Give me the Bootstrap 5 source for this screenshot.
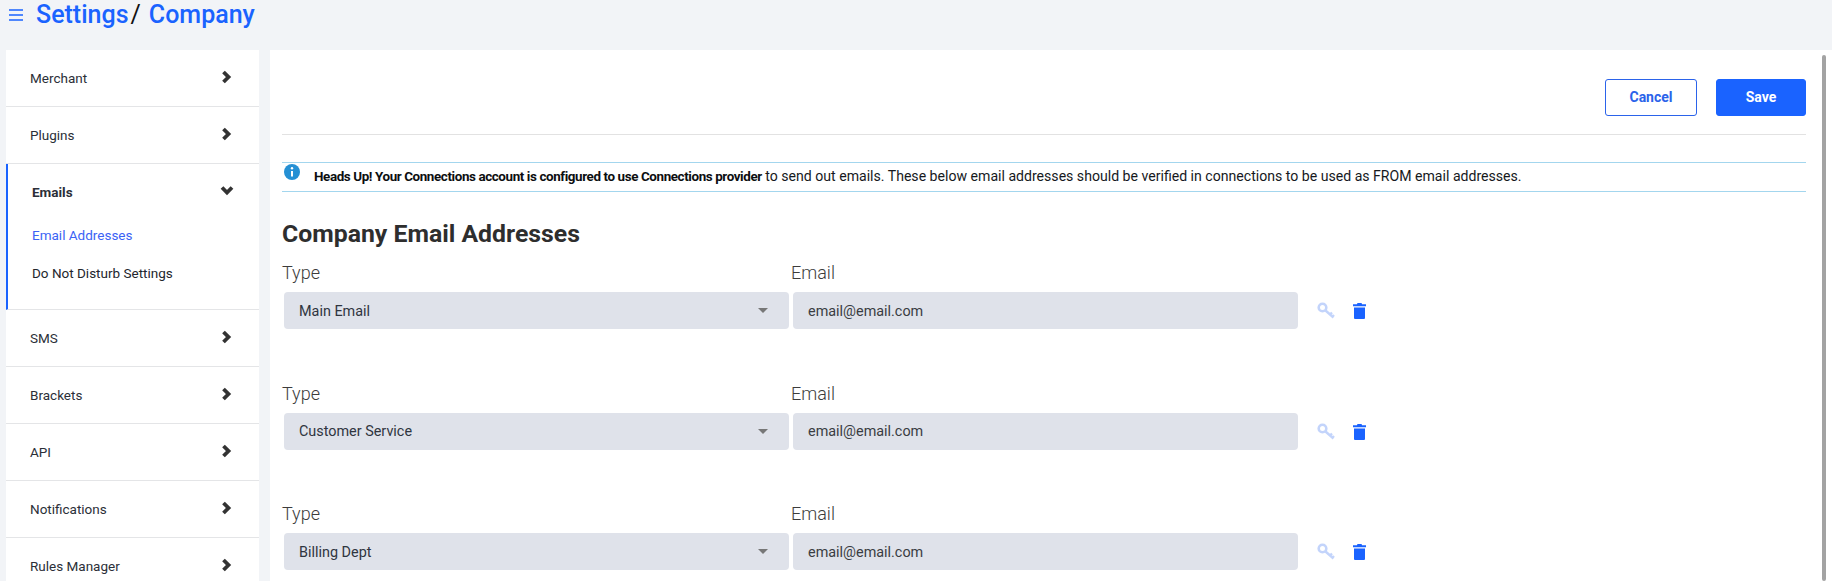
<!DOCTYPE html>
<html lang="en"><head><meta charset="utf-8"><title>Settings / Company</title>
<link href="https://cdn.jsdelivr.net/npm/bootstrap@5.3.0/dist/css/bootstrap.min.css" rel="stylesheet">
<style>
html,body{height:581px;overflow:hidden}
body{background:#f2f4f7;font-family:Roboto,"Liberation Sans",sans-serif;color:#212529}
.topbar{height:50px;padding:0 0 0 9px;color:#1a63ff}
.topbar .burger{width:14px;height:12px;margin-top:9px;margin-right:13px}
.crumb{font-size:25px;font-weight:500;line-height:29px;color:#1a63ff;text-decoration:none}
.sep{font-size:25px;line-height:29px;color:#111;margin:0 8px 0 2px}
.shell{height:531px;padding-left:6px;overflow:hidden}
.sidebar{width:253px;height:531px;overflow:hidden;margin-right:11px;background:#fff;flex:none}
.side-item{height:57px;padding:0 27px 0 24px;border-bottom:1px solid #e4e5e7;font-size:13.5px;color:#2b2f38;text-decoration:none}
.side-open{height:146px;border-left:2px solid #1a63ff;border-bottom:1px solid #e4e5e7;padding:19px 27px 0 24px;font-size:13.5px}
.side-open .head{font-weight:700;height:18px;color:#2b2f38}
.side-open a{display:block;line-height:18px;text-decoration:none;color:#23262d}
.side-open a.first{margin-top:25px;color:#3b63f5}
.side-open a.second{margin-top:20px}
.chev{width:11px;height:14px;flex:none;margin-top:-3px}
.chev-d{width:14px;height:11px;flex:none;margin:-3px -2px 0 0}
.panel{background:#fff;flex:1;height:531px;overflow:hidden;padding:29px 26px 0 12px;position:relative;min-width:0}
.scroll-thumb{position:absolute;right:6px;top:5px;width:4px;height:526px;background:#a3a3a3;border-radius:2px}
.actions{height:56px;border-bottom:1px solid #e2e2e2;gap:19px}
.btn-a{width:92px;height:37px;font-size:14px;font-weight:700;border-radius:3px;padding:0;border:1px solid #2b63ea;color:#2b63ea;background:#fff}
.btn-b{width:90px;height:37px;font-size:14px;font-weight:700;border-radius:3px;padding:0;background:#1a63ff;border:1px solid #1a63ff;color:#fff}
.notice{margin-top:27px;height:30px;border-top:1px solid #a3d6ee;border-bottom:1px solid #a3d6ee;font-size:14.1px;color:#16191d;line-height:27px;padding-left:2px}
.notice svg{width:16px;height:16px;margin:1px 14px 0 0;flex:none}
.notice b{font-weight:700;font-size:13.4px;letter-spacing:-.39px;color:#0c0e10}
.ttl{font-size:24.8px;font-weight:700;color:#2e2e2e;line-height:28px;margin:28px 0 2px}
.rowset{height:120.5px;padding-top:11px}
.lab{font-size:18px;font-weight:300;color:#3c3c3c;line-height:24px;height:24px;margin-bottom:7px}
.lab-a{width:509px}
.field{height:37px;border:0;border-radius:4px;background-color:#dfe2ea;color:#2f3540;font-size:14.4px;box-shadow:none;padding:1px 15px 0}
.sel{width:505px;margin:0 4px 0 2px;padding-top:2px;background-image:url("data:image/svg+xml,%3csvg xmlns='http://www.w3.org/2000/svg' viewBox='0 0 10 5'%3e%3cpath d='M0 0h10L5 5z' fill='%23777'/%3e%3c/svg%3e");background-position:right 21px center;background-size:10px 5px}
.inp{width:505px;flex:none;color:#3a3d42}
.inp:focus,.sel:focus{background-color:#dfe2ea;box-shadow:none}
.ico-row{margin-left:19px;gap:18px;padding-top:1px}
.key{width:18px;height:18px}
.trash{width:13px;height:16px}
</style></head>
<body>
<div class="topbar d-flex align-items-start">
 <svg class="burger" viewBox="0 0 14 12" aria-hidden="true"><path d="M0 1h14M0 6h14M0 11h14" stroke="#1a63ff" stroke-width="1.6"/></svg>
 <a class="crumb" href="#">Settings</a><span class="sep">/</span><a class="crumb" href="#">Company</a>
</div>
<div class="shell d-flex">
 <nav class="sidebar">
  <a class="side-item d-flex align-items-center justify-content-between" href="#">Merchant <svg class="chev" viewBox="0 0 11 14"><path d="M2.5 2l5 5-5 5" fill="none" stroke="#333" stroke-width="3.8"/></svg></a>
  <a class="side-item d-flex align-items-center justify-content-between" href="#">Plugins <svg class="chev" viewBox="0 0 11 14"><path d="M2.5 2l5 5-5 5" fill="none" stroke="#333" stroke-width="3.8"/></svg></a>
  <div class="side-open">
   <div class="head d-flex align-items-center justify-content-between">Emails <svg class="chev-d" viewBox="0 0 14 11"><path d="M2 2.5l5 5 5-5" fill="none" stroke="#333" stroke-width="3.8"/></svg></div>
   <a class="first" href="#">Email Addresses</a>
   <a class="second" href="#">Do Not Disturb Settings</a>
  </div>
  <a class="side-item d-flex align-items-center justify-content-between" href="#">SMS <svg class="chev" viewBox="0 0 11 14"><path d="M2.5 2l5 5-5 5" fill="none" stroke="#333" stroke-width="3.8"/></svg></a>
  <a class="side-item d-flex align-items-center justify-content-between" href="#">Brackets <svg class="chev" viewBox="0 0 11 14"><path d="M2.5 2l5 5-5 5" fill="none" stroke="#333" stroke-width="3.8"/></svg></a>
  <a class="side-item d-flex align-items-center justify-content-between" href="#">API <svg class="chev" viewBox="0 0 11 14"><path d="M2.5 2l5 5-5 5" fill="none" stroke="#333" stroke-width="3.8"/></svg></a>
  <a class="side-item d-flex align-items-center justify-content-between" href="#">Notifications <svg class="chev" viewBox="0 0 11 14"><path d="M2.5 2l5 5-5 5" fill="none" stroke="#333" stroke-width="3.8"/></svg></a>
  <a class="side-item d-flex align-items-center justify-content-between" href="#">Rules Manager <svg class="chev" viewBox="0 0 11 14"><path d="M2.5 2l5 5-5 5" fill="none" stroke="#333" stroke-width="3.8"/></svg></a>
 </nav>
 <main class="panel">
  <div class="scroll-thumb"></div>
  <div class="actions d-flex justify-content-end align-items-start">
   <button class="btn btn-a" type="button">Cancel</button>
   <button class="btn btn-b" type="button">Save</button>
  </div>
  <div class="notice d-flex align-items-start">
   <svg viewBox="0 0 16 16"><circle cx="8" cy="8" r="8" fill="#2590d4"/><circle cx="8" cy="4.3" r="1.2" fill="#fff"/><path d="M8 7v5.5" stroke="#fff" stroke-width="2"/></svg>
   <span><b>Heads Up! Your Connections account is configured to use Connections provider</b> to send out emails. These below email addresses should be verified in connections to be used as FROM email addresses.</span>
  </div>
  <h2 class="ttl">Company Email Addresses</h2>

  <div class="rowset">
   <div class="d-flex lab"><div class="lab-a">Type</div><div>Email</div></div>
   <div class="d-flex align-items-center">
    <select class="form-select field sel"><option>Main Email</option></select>
    <input class="form-control field inp" value="email@email.com">
    <div class="d-flex align-items-center ico-row">
     <svg class="key" viewBox="0 0 18 18"><circle cx="5.5" cy="5.5" r="3.8" fill="none" stroke="#c3d4fb" stroke-width="2.6"/><path d="M8.5 8.5l8 7M13 12.5l2-2M15.5 14.5l1.5-1.5" fill="none" stroke="#c3d4fb" stroke-width="2.4"/></svg>
     <svg class="trash" viewBox="0 0 13 16"><path d="M4.5 0h4l.6 1.2H13v2H0v-2h3.9zM1 4.5h11V15a1 1 0 0 1-1 1H2a1 1 0 0 1-1-1z" fill="#1a63ff"/></svg>
    </div>
   </div>
  </div>

  <div class="rowset">
   <div class="d-flex lab"><div class="lab-a">Type</div><div>Email</div></div>
   <div class="d-flex align-items-center">
    <select class="form-select field sel"><option>Customer Service</option></select>
    <input class="form-control field inp" value="email@email.com">
    <div class="d-flex align-items-center ico-row">
     <svg class="key" viewBox="0 0 18 18"><circle cx="5.5" cy="5.5" r="3.8" fill="none" stroke="#c3d4fb" stroke-width="2.6"/><path d="M8.5 8.5l8 7M13 12.5l2-2M15.5 14.5l1.5-1.5" fill="none" stroke="#c3d4fb" stroke-width="2.4"/></svg>
     <svg class="trash" viewBox="0 0 13 16"><path d="M4.5 0h4l.6 1.2H13v2H0v-2h3.9zM1 4.5h11V15a1 1 0 0 1-1 1H2a1 1 0 0 1-1-1z" fill="#1a63ff"/></svg>
    </div>
   </div>
  </div>

  <div class="rowset">
   <div class="d-flex lab"><div class="lab-a">Type</div><div>Email</div></div>
   <div class="d-flex align-items-center">
    <select class="form-select field sel"><option>Billing Dept</option></select>
    <input class="form-control field inp" value="email@email.com">
    <div class="d-flex align-items-center ico-row">
     <svg class="key" viewBox="0 0 18 18"><circle cx="5.5" cy="5.5" r="3.8" fill="none" stroke="#c3d4fb" stroke-width="2.6"/><path d="M8.5 8.5l8 7M13 12.5l2-2M15.5 14.5l1.5-1.5" fill="none" stroke="#c3d4fb" stroke-width="2.4"/></svg>
     <svg class="trash" viewBox="0 0 13 16"><path d="M4.5 0h4l.6 1.2H13v2H0v-2h3.9zM1 4.5h11V15a1 1 0 0 1-1 1H2a1 1 0 0 1-1-1z" fill="#1a63ff"/></svg>
    </div>
   </div>
  </div>
 </main>
</div>
<script src="https://cdn.jsdelivr.net/npm/bootstrap@5.3.0/dist/js/bootstrap.bundle.min.js"></script>
</body></html>
